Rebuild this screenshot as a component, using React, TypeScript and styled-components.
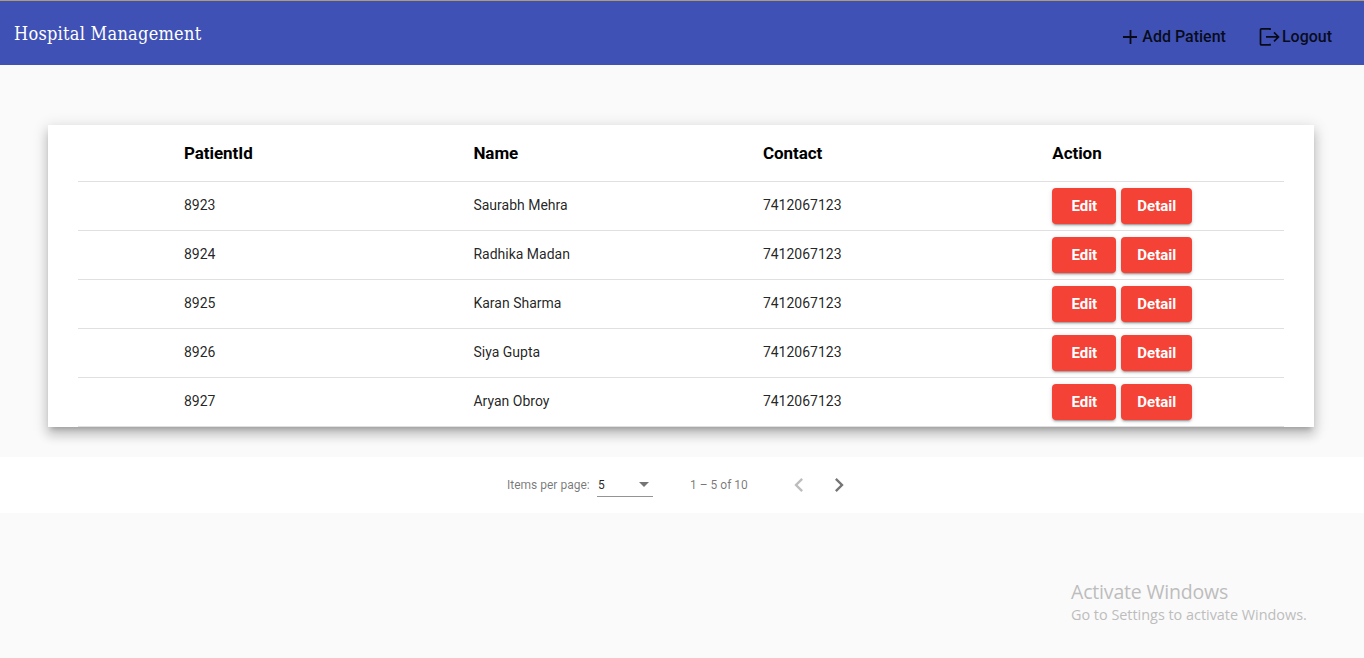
import React from 'react';
import styled, { createGlobalStyle } from 'styled-components';

const GlobalStyle = createGlobalStyle`
  * { box-sizing: border-box; }
  body { margin: 0; background: #fafafa; font-family: Roboto, sans-serif; }
`;

const Page = styled.div`
  position: relative;
  height: 658px;
  overflow: hidden;
  background: #fafafa;
`;

const Toolbar = styled.header`
  display: flex;
  justify-content: space-between;
  height: 65px;
  padding: 0 32px 0 14px;
  border-top: 1px solid #b39b6f;
  background: #3f51b5;
`;

const Brand = styled.h1`
  margin: 0;
  padding-top: 21px;
  font: 400 18px/24px 'DejaVu Serif Condensed', 'DejaVu Serif', serif;
  letter-spacing: 0.27px;
  color: #fff;
  white-space: nowrap;
`;

const Nav = styled.nav`
  display: flex;
  gap: 33px;
  padding-top: 23px;
`;

const NavLink = styled.a<{ $gap: number }>`
  display: flex;
  align-items: center;
  gap: ${(p) => p.$gap}px;
  height: 24px;
  font-size: 16px;
  font-weight: 500;
  color: rgba(0, 0, 0, 0.87);
  white-space: nowrap;
`;

const Card = styled.main`
  margin: 60px 50px 30px 48px;
  padding: 0 30px;
  background: #fff;
  box-shadow: 0 5px 5px -3px rgba(0, 0, 0, 0.2), 0 8px 10px 1px rgba(0, 0, 0, 0.14),
    0 3px 14px 2px rgba(0, 0, 0, 0.12);
`;

const Row = styled.div<{ $head?: boolean }>`
  display: grid;
  grid-template-columns: repeat(3, 289.44px) 1fr;
  align-items: center;
  height: ${(p) => (p.$head ? 57 : 49)}px;
  padding-left: 106px;
  border-bottom: 1px solid #e0e0e0;
`;

const HeadCell = styled.div`
  font-size: 17px;
  font-weight: 700;
  letter-spacing: -0.06px;
  color: #000;
`;

const Cell = styled.div`
  padding-bottom: 2px;
  font-size: 14px;
  color: rgba(0, 0, 0, 0.87);
`;

const Actions = styled.div`
  display: flex;
  gap: 5px;
`;

const ActionButton = styled.button<{ $width: number }>`
  width: ${(p) => p.$width}px;
  height: 36px;
  padding: 0;
  border: 0;
  border-radius: 4px;
  background: #f44336;
  color: #fff;
  font: 700 15px/36px Roboto, sans-serif;
  box-shadow: 0 3px 1px -2px rgba(0, 0, 0, 0.2), 0 2px 2px 0 rgba(0, 0, 0, 0.14),
    0 1px 5px 0 rgba(0, 0, 0, 0.12);
`;

const Paginator = styled.footer`
  position: relative;
  display: flex;
  align-items: center;
  height: 56px;
  padding-left: 507px;
  background: #fff;
  font-size: 12px;
  color: rgba(0, 0, 0, 0.54);
  white-space: nowrap;
`;

const PageLabel = styled.span`
  width: 90px;
`;

const PageSize = styled.div`
  display: flex;
  align-items: center;
  justify-content: space-between;
  width: 56px;
  height: 24px;
  padding: 0 4px 0 1px;
  border-bottom: 1px solid #949494;
  color: rgba(0, 0, 0, 0.87);
`;

const Range = styled.span`
  width: 95px;
  margin-left: 37px;
`;

const Arrows = styled.div`
  display: flex;
  gap: 12px;
`;

const Watermark = styled.aside`
  position: absolute;
  left: 1071px;
  top: 579px;
  font-family: 'Open Sans', sans-serif;
  color: #bdbdbd;
  white-space: nowrap;
`;

const WatermarkTitle = styled.div`
  font-size: 19.5px;
  line-height: 26px;
  letter-spacing: -0.18px;
`;

const WatermarkText = styled.div`
  font-size: 14.4px;
  line-height: 20px;
`;

const patients = [
  ['8923', 'Saurabh Mehra'],
  ['8924', 'Radhika Madan'],
  ['8925', 'Karan Sharma'],
  ['8926', 'Siya Gupta'],
  ['8927', 'Aryan Obroy'],
];

export default function App() {
  return (
    <>
      <GlobalStyle />
      <Page>
        <Toolbar>
          <Brand>Hospital Management</Brand>
          <Nav>
            <NavLink $gap={4}>
              <svg width="16" height="16" viewBox="0 0 16 16" stroke="currentColor" strokeWidth="1.8">
                <path d="M8.5 2v14M1 9h14" fill="none" />
              </svg>
              Add Patient
            </NavLink>
            <NavLink $gap={2}>
              <svg width="21" height="20" viewBox="0 0 21 20" fill="none" stroke="currentColor" strokeWidth="1.7">
                <path d="M11 4V2.9H2.5Q1.5 2.9 1.5 3.9V17.9Q1.5 18.9 2.5 18.9H11V17.8M7 10.9H19.5M15 6.4L19.5 10.9L15 15.4" />
              </svg>
              Logout
            </NavLink>
          </Nav>
        </Toolbar>
        <Card>
          <Row $head>
            {['PatientId', 'Name', 'Contact', 'Action'].map((h) => (
              <HeadCell key={h}>{h}</HeadCell>
            ))}
          </Row>
          {patients.map(([id, name]) => (
            <Row key={id}>
              <Cell>{id}</Cell>
              <Cell>{name}</Cell>
              <Cell>7412067123</Cell>
              <Actions>
                <ActionButton $width={64}>Edit</ActionButton>
                <ActionButton $width={71}>Detail</ActionButton>
              </Actions>
            </Row>
          ))}
        </Card>
        <Paginator>
          <PageLabel>Items per page:</PageLabel>
          <PageSize>
            5
            <svg width="10" height="5" viewBox="0 0 10 5">
              <path d="M0 0h10L5 5z" fill="#757575" />
            </svg>
          </PageSize>
          <Range>1 – 5 of 10</Range>
          <Arrows>
            <svg width="28" height="28" viewBox="0 0 24 24" fill="#bdbdbd">
              <path d="M15.41 7.41L14 6l-6 6 6 6 1.41-1.41L10.83 12z" />
            </svg>
            <svg width="28" height="28" viewBox="0 0 24 24" fill="#757575">
              <path d="M10 6L8.59 7.41 13.17 12l-4.58 4.59L10 18l6-6z" />
            </svg>
          </Arrows>
        </Paginator>
        <Watermark>
          <WatermarkTitle>Activate Windows</WatermarkTitle>
          <WatermarkText>Go to Settings to activate Windows.</WatermarkText>
        </Watermark>
      </Page>
    </>
  );
}
